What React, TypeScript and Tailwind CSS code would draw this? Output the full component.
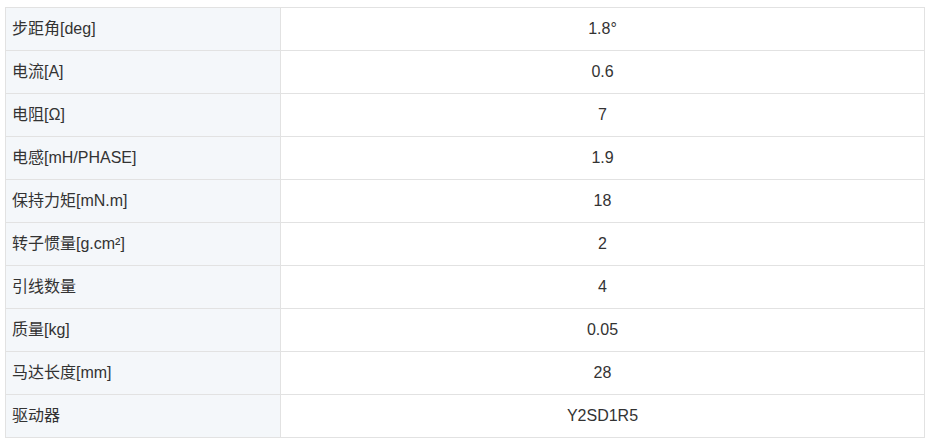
const rows: [string, string][] = [
  ['步距角[deg]', '1.8°'],
  ['电流[A]', '0.6'],
  ['电阻[Ω]', '7'],
  ['电感[mH/PHASE]', '1.9'],
  ['保持力矩[mN.m]', '18'],
  ['转子惯量[g.cm²]', '2'],
  ['引线数量', '4'],
  ['质量[kg]', '0.05'],
  ['马达长度[mm]', '28'],
  ['驱动器', 'Y2SD1R5'],
];

export default function App() {
  return (
    <div className="bg-white w-[934px] h-[443px] pt-[7px] pl-[5px] font-['Liberation_Sans','Noto_Sans_CJK_SC',sans-serif] text-[16px] text-[#333]">
      <table className="w-[920px] border-collapse table-fixed">
        <tbody>
          {rows.map(([k, v]) => (
            <tr key={k} className="h-[43px]">
              <td className="w-[275px] border border-[#e2e2e2] bg-[#f4f7fa] px-[6px]">{k}</td>
              <td className="border border-[#e2e2e2] text-center">{v}</td>
            </tr>
          ))}
        </tbody>
      </table>
    </div>
  );
}
